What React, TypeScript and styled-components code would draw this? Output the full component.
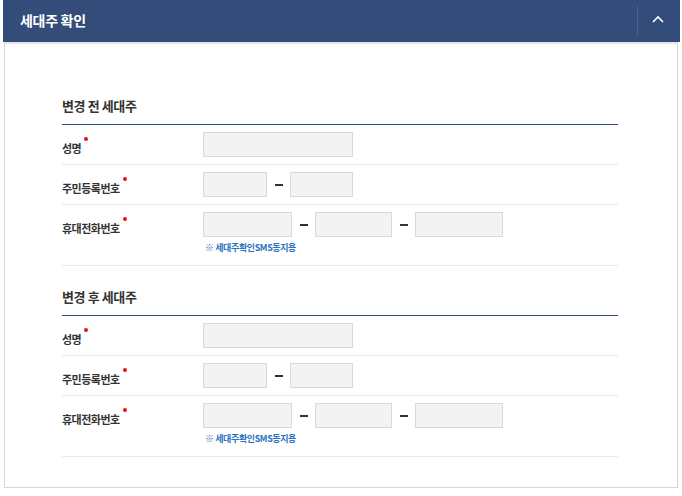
import React from "react";
import styled, { createGlobalStyle } from "styled-components";

const GlobalStyle = createGlobalStyle`
  body {
    margin: 0;
    background: #fff;
    font-family: "Noto Sans CJK KR", "Noto Sans", sans-serif;
    color: #333;
  }
`;

type Field = { label: string; widths: number[]; note?: string };

const fields: Field[] = [
  { label: "성명", widths: [150] },
  { label: "주민등록번호", widths: [64, 63] },
  { label: "휴대전화번호", widths: [89, 77, 88], note: "※ 세대주확인SMS동지용" },
];

const sections = ["변경 전 세대주", "변경 후 세대주"];

const App = () => {
  return (
    <>
      <GlobalStyle />
      <Panel>
        <PanelHeader>
          <PanelTitle>세대주 확인</PanelTitle>
          <ToggleButton aria-label="접기">
            <svg width="12" height="8" viewBox="0 0 12 8">
              <path d="M1 7 L6 2 L11 7" fill="none" stroke="#fff" strokeWidth="1.6" />
            </svg>
          </ToggleButton>
        </PanelHeader>
        <PanelBody>
          {sections.map((title) => (
            <Section key={title}>
              <SectionTitle>{title}</SectionTitle>
              {fields.map((f) => (
                <Row key={f.label} $tall={!!f.note}>
                  <Label>
                    {f.label}
                    <Required />
                  </Label>
                  <FieldCol>
                    <Inputs>
                      {f.widths.map((w, i) => (
                        <React.Fragment key={i}>
                          {i > 0 && <Dash />}
                          <TextInput style={{ width: w }} />
                        </React.Fragment>
                      ))}
                    </Inputs>
                    {f.note && <Note>{f.note}</Note>}
                  </FieldCol>
                </Row>
              ))}
            </Section>
          ))}
        </PanelBody>
      </Panel>
    </>
  );
};

export default App;

const Panel = styled.div`
  margin-left: 3px;
  width: 677px;
`;

const PanelHeader = styled.div`
  height: 42px;
  background-color: #334c79;
  display: flex;
  align-items: center;
  justify-content: space-between;
`;

const PanelTitle = styled.h2`
  margin: 0 0 2px 17px;
  font-size: 14px;
  font-weight: 700;
  color: #fff;
  letter-spacing: -0.3px;
`;

const ToggleButton = styled.button`
  width: 43px;
  height: 30px;
  border: none;
  border-left: 1px solid #4a6190;
  background: transparent;
  display: flex;
  align-items: center;
  justify-content: center;
  padding: 0 2px 4px 0;
  cursor: pointer;
`;

const PanelBody = styled.div`
  margin: 0 2px 0 1px;
  border: 1px solid #d6d6d6;
  border-top: 2px solid #e4e4e4;
  padding: 52px 59px 30px 57px;
  display: flex;
  flex-direction: column;
  gap: 21px;
`;

const Section = styled.section`
  display: flex;
  flex-direction: column;
`;

const SectionTitle = styled.h3`
  margin: 0;
  padding-bottom: 8px;
  font-size: 13px;
  font-weight: 700;
  line-height: 20px;
  color: #333;
  letter-spacing: -0.4px;
  border-bottom: 1px solid #2f4a7a;
`;

const Row = styled.div<{ $tall: boolean }>`
  display: flex;
  align-items: flex-start;
  padding: 7px 0 ${(p) => (p.$tall ? "10px" : "7px")};
  border-bottom: 1px solid #ebebeb;
`;

const Label = styled.div`
  width: 141px;
  flex-shrink: 0;
  padding-top: 5px;
  font-size: 11px;
  font-weight: 700;
  line-height: 16px;
  color: #333;
  letter-spacing: -0.5px;
`;

const Required = styled.span`
  display: inline-block;
  width: 4px;
  height: 4px;
  margin-left: 3px;
  border-radius: 50%;
  background-color: #e8141b;
  vertical-align: 12px;
`;

const FieldCol = styled.div`
  display: flex;
  flex-direction: column;
`;

const Inputs = styled.div`
  display: flex;
  align-items: center;
`;

const TextInput = styled.input`
  box-sizing: border-box;
  height: 25px;
  margin: 0;
  border: 1px solid #d9d9d9;
  background-color: #f3f3f3;
  outline: none;
`;

const Dash = styled.span`
  width: 23px;
  height: 25px;
  display: flex;
  align-items: center;
  justify-content: center;

  &::before {
    content: "";
    width: 8px;
    height: 2px;
    background-color: #333;
  }
`;

const Note = styled.p`
  margin: 4px 0 0 2px;
  font-size: 9px;
  font-weight: 700;
  color: #2f72c4;
  letter-spacing: -0.4px;
  line-height: 14px;
`;
